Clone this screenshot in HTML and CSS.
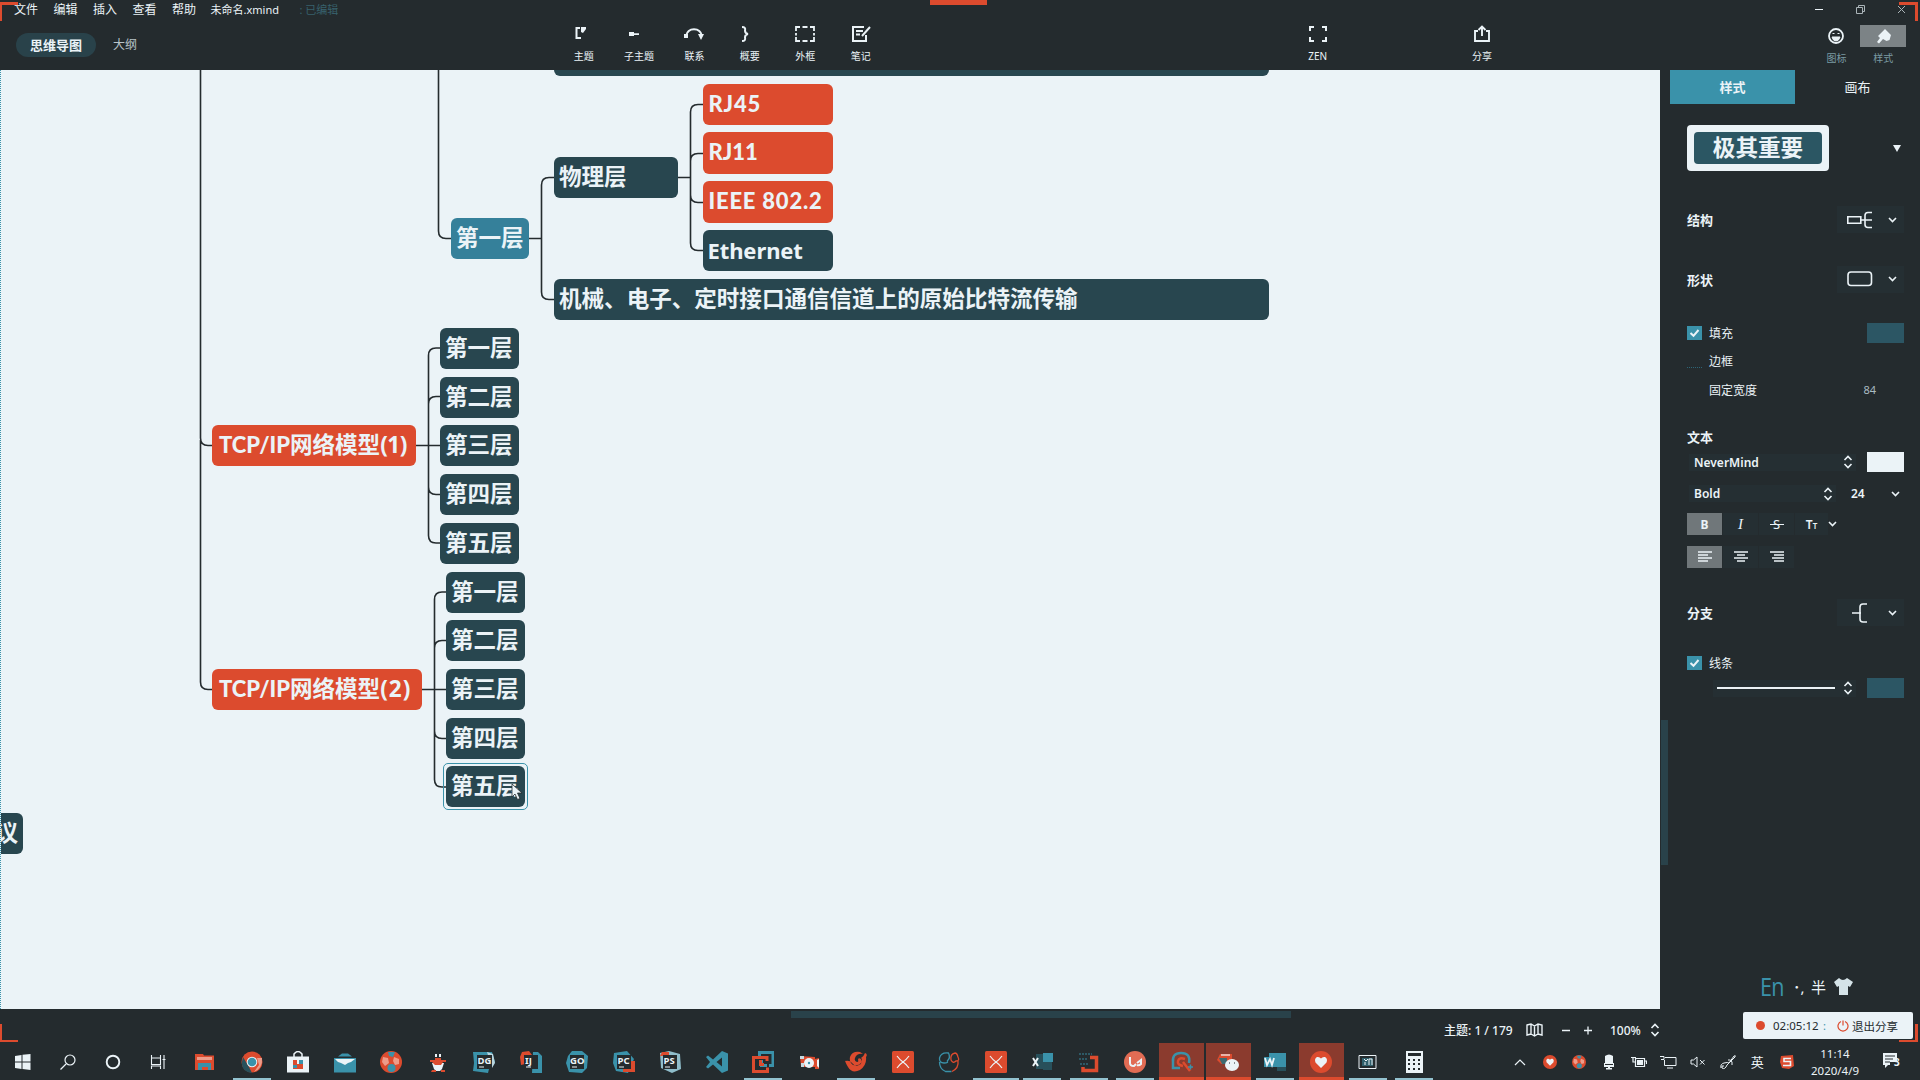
FILE: index.html
```html
<!DOCTYPE html>
<html lang="zh-CN">
<head>
<meta charset="utf-8">
<title>未命名.xmind</title>
<link rel="stylesheet" href="styles.css">
</head>
<body>
<svg class="defs" width="0" height="0" aria-hidden="true">
  <defs>
    <symbol id="chev" viewBox="0 0 9 6"><path d="M1 1l3.500 3.500L8 1" fill="none" stroke="currentColor" stroke-width="1.600"/></symbol>
    <symbol id="updown" viewBox="0 0 10 14"><path d="M1.500 5L5 1.500 8.500 5M1.500 9L5 12.500 8.500 9" fill="none" stroke="currentColor" stroke-width="1.600"/></symbol>
    <symbol id="tick" viewBox="0 0 15 14"><path d="M3.500 7l3 2.800L11.500 4" fill="none" stroke="currentColor" stroke-width="2"/></symbol>
    <symbol id="ball" viewBox="0 0 22 22"><circle cx="11" cy="11" r="11" fill="#dc4b2e"/><path d="M8 1h7l-2 5-4-1z" fill="#3a92aa"/><circle cx="11.500" cy="17" r="4" fill="#3a92aa"/><path d="M3 6l5 1 1 5-4 3-3-4zM14 6l5 2v5l-4 1-2-4z" fill="#ed9c8a"/></symbol>
    <symbol id="xapp" viewBox="0 0 22 22"><rect width="22" height="22" rx="1.500" fill="#dc4b2e"/><path d="M5 5q3 4 6 6 3-2 6-6M5 17q3-4 6-6 3 2 6 6" fill="none" stroke="#ebf3f7" stroke-width="1.200"/></symbol>
    <symbol id="heart" viewBox="0 0 22 22"><circle cx="11" cy="11" r="11" fill="#dc4b2e"/><path d="M11 17L5.500 11.500q-1.500-4 1.500-5.500 2.500-.5 4 1.500 1.500-2 4-1.500 3 1.500 1.500 5.500z" fill="#ebf3f7"/></symbol>
  </defs>
</svg>
<div class="app">
  <header class="head">
    <nav class="menu">
      <span>文件</span><span>编辑</span><span>插入</span><span>查看</span><span>帮助</span>
      <span class="doc">未命名.xmind</span><span class="edited">: 已编辑</span>
      <span class="window-buttons">
        <svg width="9" height="9"><path d="M0 4.500h8" stroke="#ebf3f7"/></svg>
        <svg width="9" height="9"><path d="M.5 2.500h6v6h-6zM2.500 2.500v-2h6v6h-2" fill="none" stroke="#aab4b8"/></svg>
        <svg width="9" height="9"><path d="M1 1l7 7M8 1L1 8" stroke="#aab4b8"/></svg>
      </span>
    </nav>
    <div class="bar">
      <div class="modes"><span class="pill">思维导图</span><span class="outline">大纲</span></div>
      <div class="tools main-tools">
        <div class="tool"><svg viewBox="0 0 22 18"><path d="M7 3H3.500v10H8" fill="none" stroke="currentColor" stroke-width="2"/><path d="M8 2h5v2l-3 4-2-1z" fill="currentColor"/></svg>主题</div>
        <div class="tool"><svg viewBox="0 0 22 18"><path d="M1 7h5v4H1zM6 8.300h5v1.800H6z" fill="currentColor"/></svg>子主题</div>
        <div class="tool"><svg viewBox="0 0 22 18"><path d="M3 11C5 2 17 2 19 11" fill="none" stroke="currentColor" stroke-width="2"/><path d="M1 9h4v4H1zM15 9h6l-3 6z" fill="currentColor"/></svg>联系</div>
        <div class="tool"><svg viewBox="0 0 22 18"><path d="M3 2q4 0 3 3.500 0 3 3 3.500-3 .5-3 3.500 1 3.500-3 3.500" fill="none" stroke="currentColor" stroke-width="2"/></svg>概要</div>
        <div class="tool"><svg viewBox="0 0 22 18"><path d="M2 6V2h4M16 2h4v4M20 12v4h-4M6 16H2v-4M8.500 2h5M8.500 16h5M2 8v2.500M20 8v2.500" fill="none" stroke="currentColor" stroke-width="1.800"/></svg>外框</div>
        <div class="tool"><svg viewBox="0 0 22 18"><path d="M14 2H3v14h13v-6M6 6h7M6 9.500h4M20 2l-8 9" fill="none" stroke="currentColor" stroke-width="2"/></svg>笔记</div>
      </div>
      <div class="tool zen"><svg viewBox="0 0 22 18"><path d="M3 6V2h4M15 2h4v4M19 12v4h-4M7 16H3v-4" fill="none" stroke="currentColor" stroke-width="2"/></svg>ZEN</div>
      <div class="tool share"><svg viewBox="0 0 22 18"><path d="M7 6H4v10h14V6h-3M11 11V2M7.500 5L11 1.500 14.500 5" fill="none" stroke="currentColor" stroke-width="1.900"/></svg>分享</div>
      <div class="tool side icon-tool"><svg viewBox="0 0 18 18"><circle cx="9" cy="9" r="7" fill="none" stroke="currentColor" stroke-width="1.800"/><path d="M5 10h8q-1 4-4 4t-4-4M5.500 6.500h2M10.500 6.500h2" stroke="currentColor" stroke-width="1" fill="currentColor"/></svg><em>图标</em></div>
      <div class="tool side style-tool"><svg viewBox="0 0 46 22"><path d="M25 4l6 6-1.500 5-3 1-3.500-2-4 4.500-2-1.500 3-4-2-2z" fill="#ebf3f7"/></svg><em>样式</em></div>
    </div>
  </header>

  <main class="work">
    <section class="canvas">
      <svg class="links" width="1660" height="939" fill="none" stroke="#242b2e" stroke-width="1.600">
        <path d="M200.500 0V368q0 7.500 7.500 7.500h5M200.500 370V612q0 7.500 7.500 7.500h5"/>
        <path d="M438.500 0V161q0 7.500 7.500 7.500h6M529 168.500h12.500M554 107.500h-5q-7.500 0-7.500 7.500V167q0 0 0 0V222q0 7.500 7.500 7.500h5"/>
        <path d="M678 107.500h12.500M703 34.500h-5q-7.500 0-7.500 7.500V173q0 7.500 7.500 7.500h5M690.500 91q0-7.500 7.500-7.500h5M690.500 125q0 7.500 7.500 7.500h5"/>
        <path d="M416 375.500h24M440 278h-4q-7.500 0-7.500 7.500V465.500q0 7.500 7.500 7.500h4M428.500 334q0-7.500 7.500-7.500h4M428.500 417q0 7.500 7.500 7.500h4"/>
        <path d="M422 619.500h24M446 522h-4q-7.500 0-7.500 7.500V709.500q0 7.500 7.500 7.500h4M434.500 578q0-7.500 7.500-7.500h4M434.500 661q0 7.500 7.500 7.500h4"/>
      </svg>
      <div class="node cut"></div>
      <div class="node n-rj45 red">RJ45</div>
      <div class="node n-rj11 red">RJ11</div>
      <div class="node n-ieee red">IEEE 802.2</div>
      <div class="node n-eth">Ethernet</div>
      <div class="node n-phy">物理层</div>
      <div class="node n-mech">机械、电子、定时接口通信信道上的原始比特流传输</div>
      <div class="node n-first teal">第一层</div>
      <div class="node n-tcp1 red tcp"><b>TCP/IP</b>网络模型<em>(1)</em></div>
      <div class="node n-tcp2 red tcp"><b>TCP/IP</b>网络模型<em>(2)</em></div>
      <div class="layers l-one"><div class="node">第一层</div><div class="node">第二层</div><div class="node">第三层</div><div class="node">第四层</div><div class="node">第五层</div></div>
      <div class="layers l-two"><div class="node">第一层</div><div class="node">第二层</div><div class="node">第三层</div><div class="node">第四层</div><div class="node selected">第五层</div></div>
      <div class="node n-left">议</div>
      <svg class="cursor" width="12" height="18"><path d="M1 1v13l3-3 2.500 5.500 2.500-1-2.500-5.500H11z" fill="#ebf3f7" stroke="#242b2e" stroke-width=".8"/></svg>
    </section>
    <div class="vscroll"><i></i></div>

    <aside class="panel">
      <div class="tabs"><span class="on">样式</span><span>画布</span></div>
      <div class="preview"><div class="frame"><span>极其重要</span></div><svg width="8" height="7"><path d="M0 0h8L4 7z" fill="#ebf3f7"/></svg></div>
      <div class="row r-structure"><h3>结构</h3><div class="drop"><svg width="26" height="18"><path d="M.8 5.800h13v6.500H.8zM14 9h11M25 1.500h-4q-3 0-3 3v9q0 3 3 3h4" fill="none" stroke="currentColor" stroke-width="1.600"/></svg><svg class="chev"><use href="#chev"/></svg></div></div>
      <div class="row r-shape"><h3>形状</h3><div class="drop"><svg width="26" height="18"><rect x="1" y="2" width="23.500" height="13.500" rx="3" fill="none" stroke="currentColor" stroke-width="1.600"/></svg><svg class="chev"><use href="#chev"/></svg></div></div>
      <div class="row r-fill"><svg class="check"><use href="#tick"/></svg><label>填充</label><i class="swatch dim"></i></div>
      <div class="row r-border"><i class="unchecked"></i><label>边框</label></div>
      <div class="row r-width"><i class="nocheck"></i><label>固定宽度</label><span class="num">84</span></div>
      <div class="row r-text"><h3>文本</h3></div>
      <div class="row r-font"><div class="select wide">NeverMind<svg class="ud"><use href="#updown"/></svg></div><i class="swatch white"></i></div>
      <div class="row r-weight"><div class="select">Bold<svg class="ud"><use href="#updown"/></svg></div><span class="size">24</span><svg class="chev"><use href="#chev"/></svg></div>
      <div class="row r-format"><span class="btn on"><b>B</b></span><span class="btn i">I</span><span class="btn s">S</span><span class="btn t">T<small>T</small></span><svg class="chev"><use href="#chev"/></svg></div>
      <div class="row r-align">
        <span class="btn on"><svg width="14" height="11"><path d="M0 1h14M0 4h10M0 7h14M0 10h10" stroke="currentColor" stroke-width="1.500"/></svg></span>
        <span class="btn"><svg width="14" height="11"><path d="M0 1h14M3 4h8M0 7h14M3 10h8" stroke="currentColor" stroke-width="1.500"/></svg></span>
        <span class="btn"><svg width="14" height="11"><path d="M0 1h14M4 4h10M2 7h12M4 10h10" stroke="currentColor" stroke-width="1.500"/></svg></span>
      </div>
      <div class="row r-branch"><h3>分支</h3><div class="drop"><svg width="26" height="20"><path d="M5 10h9M20 1h-4q-3 0-3 3v12q0 3 3 3h4" fill="none" stroke="currentColor" stroke-width="1.600"/></svg><svg class="chev"><use href="#chev"/></svg></div></div>
      <div class="row r-line"><svg class="check"><use href="#tick"/></svg><label>线条</label></div>
      <div class="row r-stroke"><div class="line-select"><i></i><svg class="ud"><use href="#updown"/></svg></div><i class="swatch dim"></i></div>
    </aside>
  </main>

  <footer class="status">
    <i class="hscroll"></i>
    <span class="count">主题: 1 / 179</span>
    <svg class="map" width="17" height="14"><path d="M1 2l4-1 3.500 2L12 1l4 1v10l-4-1-3.500 2L5 11l-4 1zM5 1v10M8.500 3v10M12 1v10" fill="none" stroke="currentColor" stroke-width="1.400"/></svg>
    <svg class="minus" width="9" height="9"><path d="M0 4.500h8" stroke="currentColor" stroke-width="1.500"/></svg>
    <svg class="plus" width="9" height="9"><path d="M0 4.500h8M4 .5v8" stroke="currentColor" stroke-width="1.300"/></svg>
    <span class="percent">100%</span>
    <svg class="ud"><use href="#updown"/></svg>
  </footer>

  <footer class="taskbar">
    <div class="system">
      <span><svg width="16" height="16"><path d="M0 2l6.500-1v6.500H0zM7.500.8L15.500 0v7.500h-8zM0 8.500h6.500V15L0 14zM7.500 8.500h8V16l-8-1z" fill="#ebf3f7"/></svg></span>
      <span><svg width="16" height="16"><circle cx="10" cy="6" r="5" fill="none" stroke="#ebf3f7" stroke-width="1.200"/><path d="M6 10l-5.500 5.500" stroke="#ebf3f7" stroke-width="1.300"/></svg></span>
      <span><svg width="16" height="16"><circle cx="8" cy="8" r="6.300" fill="none" stroke="#ebf3f7" stroke-width="1.900"/></svg></span>
      <span><svg width="16" height="16"><path d="M1.500 1v3h9V1M1.500 15v-3h9v3M1.500 4v6.500h9V4M14 1v14M12.500 5.500h3" fill="none" stroke="#ebf3f7" stroke-width="1.100"/></svg></span>
    </div>
    <div class="apps">
      <span><svg viewBox="0 0 22 22"><path d="M1 3h8l1 1.500h10V19H1z" fill="#dc4b2e"/><path d="M3 6h15v3H3z" fill="#ed9c8a"/><path d="M4 12h13v7h-3v-3H8v3H4z" fill="#3a92aa"/></svg></span>
      <span class="run"><svg viewBox="0 0 22 22"><circle cx="11" cy="11" r="10.500" fill="#dc4b2e"/><path d="M2 6l6 10 3 6Q1 21 .7 12z" fill="#28505b"/><path d="M13 21l5-7-2-7h5q1 10-8 14z" fill="#ed9c8a"/><circle cx="11" cy="11" r="5.300" fill="#ebf3f7"/><circle cx="11" cy="11" r="4.300" fill="#3a92aa"/></svg></span>
      <span><svg viewBox="0 0 22 22"><path d="M7 7V3q4-5 8 0v4" fill="none" stroke="#ebf3f7" stroke-width="1.500"/><path d="M0 5.500h22v16H0z" fill="#ebf3f7"/><path d="M6 9h4v4h6v5H6z" fill="#dc4b2e"/><path d="M12 9h4v4h-4zM6 14h4v3H6z" fill="#3a92aa"/></svg></span>
      <span><svg viewBox="0 0 22 22"><path d="M0 7h22v14.500H0z" fill="#3a92aa"/><path d="M4 5.500l4-3h6l4 3z" fill="#3a92aa"/><path d="M1 8h20l-4 3-3 1-3 2-4-2-3-1z" fill="#ebf3f7"/></svg></span>
      <span><svg viewBox="0 0 22 22"><use href="#ball"/></svg></span>
      <span><svg viewBox="0 0 22 22"><path d="M8 3h2v3H8zM12 3h2v3h-2zM5 12h12l-2 6-2 2H9l-2-2z" fill="#ebf3f7"/><path d="M8 7h6v2h5v2h-3l-2 3H8l-3-3H3V9h5zM5 19h4v2H4zM14 19h4v2h-4z" fill="#dc4b2e"/></svg></span>
      <span><svg viewBox="0 0 22 22"><path d="M0 1h19l3 10-6 7-1 4-15-2 1-8z" fill="#3a92aa"/><path d="M14 1l6 2 2 9-3 5z" fill="#b8d5df"/><path d="M4 4h15v14H4z" fill="#242b2e"/><text x="4.500" y="13">DG</text><path d="M6 16h5" stroke="#ebf3f7"/></svg></span>
      <span><svg viewBox="0 0 22 22"><path d="M2 1l7-1 3 4-7 4v5l-4 1L0 6z" fill="#dc4b2e"/><path d="M13 1h5l4 4v17H12z" fill="#3a92aa"/><path d="M4 4h14v14H4z" fill="#242b2e"/><text x="5" y="13">IJ</text><path d="M6 16h5" stroke="#ebf3f7"/></svg></span>
      <span><svg viewBox="0 0 22 22"><path d="M6 0h10l6 5-1 12-5 5-13-1-3-9 2-7z" fill="#3a92aa"/><path d="M4 4h14v14H4z" fill="#242b2e"/><text x="4" y="13">GO</text><path d="M6 16h5" stroke="#ebf3f7"/></svg></span>
      <span><svg viewBox="0 0 22 22"><path d="M1 2l13-2 7 8-6 14-12-2-3-8z" fill="#3a92aa"/><path d="M17 10h5v11H10v-3h7z" fill="#dc4b2e"/><path d="M4 4h14v14H4z" fill="#242b2e"/><text x="4.500" y="13">PC</text><path d="M6 16h5" stroke="#ebf3f7"/></svg></span>
      <span><svg viewBox="0 0 22 22"><path d="M1 2l9-2 11 3 1 15-9 4-11-5z" fill="#8fbdca"/><path d="M3 1h7v4H1z" fill="#dc4b2e"/><path d="M4 4h14v14H4z" fill="#242b2e"/><text x="4.500" y="13">PS</text><path d="M6 16h5" stroke="#ebf3f7"/></svg></span>
      <span><svg viewBox="0 0 22 22"><path d="M16 0l6 2.500v17L16 22l-9-8.500-5 4-2-1.500 4-5-4-5 2-1.500 5 4zM16 6.500L10.500 11l5.500 4.500z" fill="#3a92aa"/></svg></span>
      <span class="run"><svg viewBox="0 0 22 22"><path d="M7.500 6V1.500H21v13h-4M15 14.500H9.500V9" fill="none" stroke="#3a92aa" stroke-width="3"/><path d="M15 10V6.500H1.500V20.500h14v-4M12 13.500H8.500V9" fill="none" stroke="#dc4b2e" stroke-width="3"/></svg></span>
      <span><svg viewBox="0 0 22 22"><path d="M1 5l15 1v2l4-1v11h-4v-2H2z" fill="#dc4b2e"/><circle cx="10" cy="12" r="5" fill="#ebf3f7"/><path d="M18 9l2-1v9l-2-2z" fill="#ebf3f7"/><path d="M1 5h4v3H1zM2 12h3v4H2z" fill="#c5dbe2"/><circle cx="10" cy="12" r="1.200" fill="#3a92aa"/></svg></span>
      <span class="run"><svg viewBox="0 0 22 22"><path d="M0 10q5-1 7 2 3 4 7 2 4-2 2-6-3-2-3 1 1 2-1 2-3-1-2-4 2-5 8-4l-3-2q-8-1-10 5-1 5 3 8 6 1 8-2 2-4 0-5 3-2 4-5 3 1 1 4 1 8-6 13-8 4-12-3-3-5-3-7z" fill="#dc4b2e"/></svg></span>
      <span><svg viewBox="0 0 22 22"><use href="#xapp"/></svg></span>
      <span><svg viewBox="0 0 22 22"><path d="M9 10q4-3 1.500-8Q3 1 1.500 7 1 12 6 12t3-2M1.500 11q0 7 6 9.500h6" fill="none" stroke="#3a92aa" stroke-width="1.300"/><path d="M17 2q-5 1-4 7 2 4 5 1 4 0 2-4-1-4-3-4M20 10q1 7-6 10.500" fill="none" stroke="#dc4b2e" stroke-width="1.300"/></svg></span>
      <span class="run full"><svg viewBox="0 0 22 22"><use href="#xapp"/></svg></span>
      <span class="run"><svg viewBox="0 0 22 22"><path d="M12 2h10v9h-10z" fill="#3a92aa"/><path d="M5 3h7v15H5zM12 11h9v8h-9z" fill="#28505b"/><path d="M2 7l5 8M7 7l-5 8" stroke="#ebf3f7" stroke-width="2"/></svg></span>
      <span class="run"><svg viewBox="0 0 22 22"><path d="M1 3h13M1 8h9M2 13h8" stroke="#31697a" stroke-width="1.300" stroke-dasharray="2 1"/><path d="M12 6.500h6.500v13H5V16" fill="none" stroke="#dc4b2e" stroke-width="3.500"/></svg></span>
      <span class="run"><svg viewBox="0 0 22 22"><circle cx="11" cy="11" r="11" fill="#e16c54"/><path d="M6 6v6q0 3 4 3l2-2M13 12l4-3v4q-2 2-4 1" fill="none" stroke="#ebf3f7" stroke-width="2"/></svg></span>
      <span class="hot"><svg viewBox="0 0 22 22"><path d="M18 12Q20 2 10 2 1 2 2 11v6h7" fill="none" stroke="#3a92aa" stroke-width="2.500"/><path d="M12 11l7 9M14 8q-6-2-7 2t5 5" fill="none" stroke="#dc4b2e" stroke-width="2.500"/><path d="M17 16h5M19.500 13.500v5" stroke="#3a92aa" stroke-width="1.500"/></svg></span>
      <span class="hot"><svg viewBox="0 0 22 22"><path d="M3 3h12v5h2v5H4l-4-4z" fill="#dc4b2e"/><path d="M4 3h9v2H4z" fill="#e8b3a8"/><path d="M2 7h8v6H5z" fill="#3e6970"/><ellipse cx="15" cy="14" rx="7" ry="6" fill="#ebf3f7"/><path d="M12 12h1M17 12h1" stroke="#242b2e"/></svg></span>
      <span class="run"><svg viewBox="0 0 22 22"><path d="M5 2h17v14H5z" fill="#3a92aa"/><path d="M13 16h9v4h-9z" fill="#28505b"/><path d="M0 6h11v10H0z" fill="#3a92aa"/><path d="M1 7l2 7 3-6 2 6 2-7" fill="none" stroke="#ebf3f7" stroke-width="1.800"/></svg></span>
      <span class="hot"><svg viewBox="0 0 22 22"><use href="#heart"/></svg></span>
      <span class="run"><svg viewBox="0 0 22 22"><path d="M2 4.500h17v13H2z" fill="none" stroke="#ebf3f7"/><path d="M5 7h11v8H5z" fill="#31616d"/><path d="M7 8l2 2 2-2M8 11v3M12 8v6M12 8h3v6" fill="none" stroke="#ebf3f7"/></svg></span>
      <span class="run"><svg viewBox="0 0 22 22"><path d="M3 0h17v22H3z" fill="#ebf3f7"/><path d="M5 2h13v3H5zM5 8h2v2H5zM10 8h2v2h-2zM15 8h2v2h-2zM5 12h2v2H5zM10 12h2v2h-2zM15 12h2v2h-2zM5 17h2v2H5zM10 17h2v2h-2zM15 17h2v2h-2z" fill="#242b2e"/></svg></span>
    </div>
    <div class="tray">
      <span><svg width="12" height="8"><path d="M1 7l5-5 5 5" fill="none" stroke="#ebf3f7" stroke-width="1.200"/></svg></span>
      <span><svg width="14" height="14" viewBox="0 0 22 22"><use href="#heart"/></svg></span>
      <span><svg width="14" height="14" viewBox="0 0 22 22"><use href="#ball"/></svg></span>
      <span><svg width="12" height="16"><path d="M2 2q4-3 8 0v8H2zM1 9h1v2h8V9h1v4H7v1h2v1.500H3V14h2v-1H1z" fill="#ebf3f7"/></svg></span>
      <span><svg width="16" height="12"><path d="M4.500 2.500h9v8h-9zM14 5h1.500v3M0 1.500h5M2 1v5h3" fill="none" stroke="#ebf3f7" stroke-width="1.200"/><path d="M6 4h6v5H6z" fill="#ebf3f7"/></svg></span>
      <span><svg width="17" height="14"><path d="M5 2.500h11v8H4.500V5M0 1.500h4v3H1M7 13h6" fill="none" stroke="#ebf3f7"/></svg></span>
      <span><svg width="16" height="12"><path d="M1 4h2.500L7 1v10L3.500 8H1zM10 4l4.500 4.500M14.500 4L10 8.500" fill="none" stroke="#ebf3f7"/></svg></span>
      <span><svg width="16" height="16"><path d="M1 14q-1-4 3-5t5 0l5-7q2-1 1 1L7 11q-2 5-5 3-1-3 2-2M8 6q3-1 4 2v3" fill="none" stroke="#ebf3f7"/></svg></span>
      <span class="cn">英</span>
      <span><svg width="14" height="14"><path d="M1 1l12-1 1 11-5 3-7-1-2-6z" fill="#dc4b2e"/><path d="M11 3.500H4v3h6.500v4H3" fill="none" stroke="#ebf3f7" stroke-width="1.600"/></svg></span>
    </div>
    <div class="clock"><span>11:14</span><span>2020/4/9</span></div>
    <div class="notice"><svg width="16" height="17"><path d="M1 1h14v9H8v3H6l-3 3v-3H1z" fill="#ebf3f7"/><path d="M3 4h10M3 7h8M3 10h5" stroke="#242b2e"/></svg><b>3</b></div>
  </footer>
</div>

<i class="mark top"></i><i class="mark tl"></i><i class="mark tr"></i><i class="mark bl"></i><i class="mark br"></i>
<div class="ime"><span class="en">En</span><span class="dot">･,</span><span class="half">半</span><svg width="19" height="17"><path d="M0 4l5-4q4 4 8 0l6 4-3 5-2-1v9H5V8L3 9z" fill="#d5e3e8"/></svg></div>
<div class="recording"><i></i><span class="time">02:05:12</span><span class="sep">:</span><svg width="12" height="12"><path d="M4 1.500a5 5 0 1 0 4 0M6 .5v5" fill="none" stroke="#dc4b2e" stroke-width="1.200"/></svg><span class="exit">退出分享</span></div>
</body>
</html>
```
FILE: styles.css
```css
:root { --dark: #242b2e; --light: #ebf3f7; --teal: #3a92aa; --red: #dc4b2e; --deep: #28464f; --dim: #29424a; }
* { box-sizing: border-box; }
body { margin: 0; width: 1920px; height: 1080px; overflow: hidden; background: var(--dark); color: var(--light); font-family: "Noto Sans", "Noto Sans CJK SC", sans-serif; font-size: 12px; position: relative; }
.defs { position: absolute; }
svg { display: block; flex: none; }
i, em { font-style: normal; }
.app { display: flex; flex-direction: column; height: 1080px; }

.head { height: 70px; flex: none; }
.menu { display: flex; height: 20px; padding-left: 14px; line-height: 20px; font-size: 12px; white-space: nowrap; }
.menu > span { width: 39.500px; flex: none; }
.menu .doc { width: 89px; margin-left: -1px; font-size: 11px; }
.menu .edited { width: 60px; color: #37616c; font-size: 11px; }
.menu .window-buttons { display: flex; width: auto; gap: 32px; margin-left: auto; padding: 5px 14px 0 0; }
.bar { display: flex; height: 50px; align-items: flex-start; }
.modes { display: flex; width: 566px; padding: 13px 0 0 16px; font-size: 13px; line-height: 24px; }
.pill { width: 80px; height: 24px; border-radius: 12px; background: var(--dim); font-weight: 600; text-align: center; }
.outline { margin-left: 17px; color: #b8c4c9; font-size: 12px; }
.tools { display: flex; }
.tool { display: flex; flex-direction: column; align-items: center; width: 55.400px; flex: none; font-size: 10px; line-height: 14px; padding-top: 5px; }
.tool svg { width: 22px; height: 18px; margin-bottom: 6px; }
.main-tools { width: 333px; margin-left: -10px; }
.zen { margin-left: 401px; }
.share { margin-left: 109px; }
.side em { color: #7b9aa3; }
.icon-tool { margin-left: 299px; padding-top: 7px; }
.icon-tool svg { width: 18px; height: 18px; margin-bottom: 6px; }
.style-tool { width: 46px; margin-left: -4px; }
.style-tool svg { width: 46px; height: 22px; margin-bottom: 4px; background: #7c8386; }

.work { display: flex; height: 939px; flex: none; }
.canvas { position: relative; width: 1660px; flex: none; overflow: hidden; background: var(--light); border-left: 1px dotted var(--teal); }
.links { position: absolute; left: -1px; top: 0; }
.node { position: absolute; height: 41px; border-radius: 6px; background: var(--deep); padding-left: 5px; font-size: 22.550px; line-height: 40px; font-weight: 700; white-space: nowrap; }
.red { background: var(--red); }
.teal { background: #35809a; }
.cut { left: 553px; top: -35px; width: 715px; }
.n-rj45, .n-rj11, .n-ieee, .n-eth { left: 701.500px; width: 130px; }
.n-rj45, .n-rj11, .n-ieee { padding-left: 6px; letter-spacing: .8px; }
.n-rj45, .n-rj11, .n-ieee, .tcp b { font-family: Lato, sans-serif; font-weight: 900; }
.n-rj45, .n-rj11, .n-ieee { font-size: 22px; }
.n-rj11 { letter-spacing: 0; }
.n-rj45 { top: 14px; }
.n-rj11 { top: 62px; height: 42px; }
.n-ieee { top: 111px; height: 42px; }
.n-eth { top: 160px; font-size: 22px; letter-spacing: -.1px; }
.n-phy { left: 553px; top: 87px; width: 124px; }
.n-mech { left: 553px; top: 209px; width: 715px; }
.n-first { left: 450px; top: 148px; width: 78px; }
.n-tcp1 { left: 211px; top: 355px; width: 204px; }
.n-tcp2 { left: 211px; top: 599px; width: 210px; }
.tcp { padding-left: 7px; }
.tcp b { font-size: 22px; }
.n-tcp1 em { letter-spacing: -.5px; }
.n-tcp2 em { letter-spacing: 1px; }
.layers { position: absolute; display: flex; flex-direction: column; gap: 7.700px; }
.layers .node { position: relative; width: 79px; }
.l-one { left: 439px; top: 258px; }
.l-two { left: 445px; top: 501.500px; }
.selected::after { content: ""; position: absolute; inset: -3px; border: 1px solid var(--teal); border-radius: 5px; }
.n-left { left: -50px; top: 743px; width: 72px; padding: 0 5px; text-align: right; }
.cursor { position: absolute; left: 510px; top: 713px; }
.vscroll { width: 10px; padding: 650px 0 0 1px; }
.vscroll i { display: block; width: 7px; height: 145px; background: var(--dim); }

.panel { width: 250px; }
.tabs { display: flex; height: 34px; line-height: 35px; font-size: 13px; text-align: center; }
.tabs span { width: 126px; }
.tabs .on { background: var(--teal); font-weight: 700; }
.preview { display: flex; align-items: center; height: 46px; margin: 21px 0 25px 17px; gap: 64px; }
.frame { width: 142px; height: 46px; padding: 7px; border-radius: 4px; background: var(--light); }
.frame span { display: block; height: 32px; border-radius: 4px; background: #2b5663; line-height: 31px; font-size: 22.600px; font-weight: 700; text-align: center; }
.row { display: flex; align-items: center; padding: 0 16px 0 17px; }
.row h3 { margin: 0; font-size: 13px; font-weight: 700; }
.row label { margin-left: 7px; }
.drop { display: flex; align-items: center; justify-content: space-between; width: 67px; height: 27px; margin-left: auto; padding: 0 7px 0 10px; background: #252f33; }
.chev { width: 9px; height: 6px; }
.ud { width: 10px; height: 14px; }
.check { width: 15px; height: 14px; background: var(--teal); }
.swatch { width: 37px; height: 20px; margin-left: auto; background: #2c5664; }
.swatch.white { background: var(--light); }
.unchecked { width: 15px; height: 14px; border-bottom: 1px dotted #2d6576; }
.nocheck { width: 15px; }
.num { margin-left: auto; padding-right: 28px; font-size: 11px; color: #a9bcc2; }
.select { display: flex; align-items: center; justify-content: space-between; width: 147px; height: 17px; margin-left: 2px; padding: 0 3px 0 5px; background: #252f33; font-weight: 600; }
.select.wide { width: 167px; }
.size { margin-left: 15px; font-weight: 600; }
.r-weight > .chev { margin-left: auto; margin-right: 4px; }
.btn { display: flex; width: 35px; height: 22px; align-items: center; justify-content: center; margin-right: 1px; background: #252f33; font-size: 12px; }
.btn.on { background: #70777a; }
.btn.i { font-family: "Liberation Serif", serif; font-style: italic; font-size: 15px; }
.btn.s { font-size: 13px; background: linear-gradient(var(--light), var(--light)) center / 14px 1px no-repeat #252f33; }
.btn.t { width: 33px; margin-right: 0; font-weight: 600; }
.btn small { font-size: 8px; padding-top: 3px; }
.r-structure { height: 47px; }
.r-shape { height: 72px; }
.r-fill { height: 36px; }
.r-border { height: 20px; }
.r-width { height: 37px; }
.r-text { height: 42px; padding-top: 15px; }
.r-font { height: 24px; }
.r-weight { height: 39px; }
.r-format { height: 22px; }
.r-align { height: 43px; }
.r-branch { height: 69px; }
.r-line { height: 32px; }
.r-stroke { height: 18px; }
.line-select { display: flex; align-items: center; justify-content: space-between; width: 143px; height: 17px; margin-left: 26px; padding: 0 3px 0 4px; background: #252f33; }
.line-select i { width: 118px; height: 2px; background: var(--light); }

.status { display: flex; align-items: center; height: 34px; flex: none; padding-top: 8px; font-weight: 500; font-size: 12px; }
.hscroll { width: 500px; height: 7px; margin: -32px 153px 0 791px; background: var(--dim); }
.count { width: 82px; white-space: nowrap; }
.minus { margin-left: 19px; }
.plus { margin-left: 13px; }
.percent { width: 40px; margin-left: 17px; }

.taskbar { display: flex; height: 37px; flex: none; }
.system { display: flex; width: 182px; }
.system span { display: flex; width: 45px; align-items: center; justify-content: center; }
.apps { display: flex; width: 1256px; }
.apps span { display: flex; width: 46.500px; flex: none; align-items: center; justify-content: center; }
.apps svg { width: 22px; height: 22px; }
.apps text { font: 700 9.500px "Noto Sans", sans-serif; fill: var(--light); }
.apps .run { background: linear-gradient(#93c2cf, #93c2cf) center bottom / 38px 2px no-repeat; }
.apps .run.full { background-size: 46px 2px; }
.apps .hot { background: linear-gradient(var(--red), var(--red)) center bottom / 45px 3px no-repeat, linear-gradient(#8b3b2e, #8b3b2e) center / 45px 100% no-repeat; }
.tray { display: flex; width: 300px; margin-left: 67px; }
.tray span { display: flex; width: 29.700px; flex: none; align-items: center; justify-content: center; }
.tray .cn { font-size: 13px; }
.clock { display: flex; flex-direction: column; width: 60px; text-align: center; line-height: 17px; padding-top: 2px; font-size: 11.500px; }
.notice { display: flex; width: 24px; margin: 9px 0 0 17px; }
.notice b { margin: 3px 0 0 -4px; font-size: 10px; line-height: 15px; }

.mark { position: absolute; border: 0 solid var(--red); }
.mark.top { left: 930px; top: 0; width: 57px; height: 5px; background: var(--red); }
.mark.tl { left: 0; top: 2px; width: 18px; height: 19px; border-width: 3px 0 0 2px; }
.mark.tr { left: 1899px; top: 2px; width: 19px; height: 19px; border-width: 3px 3px 0 0; }
.mark.bl { left: 0; top: 1024px; width: 18px; height: 18px; border-width: 0 0 2px 2px; }
.mark.br { left: 1899px; top: 1024px; width: 19px; height: 18px; border-width: 0 3px 2px 0; }
.ime { position: absolute; left: 1760px; top: 972px; display: flex; align-items: center; height: 28px; }
.en { width: 33px; color: var(--teal); font-family: "Open Sans", sans-serif; font-size: 26px; letter-spacing: -1px; line-height: 28px; transform: scaleX(.83); transform-origin: left; }
.dot { width: 18px; font-size: 15px; }
.half { width: 23px; font-size: 15px; }
.recording { position: absolute; left: 1743px; top: 1012px; display: flex; align-items: center; width: 170px; height: 27px; padding-left: 13px; border-radius: 2px; background: var(--light); color: var(--dark); font-size: 11px; white-space: nowrap; }
.recording i { width: 9px; height: 9px; margin-right: 8px; border-radius: 50%; background: var(--red); }
.time { width: 50px; font-size: 11.500px; }
.sep { width: 14px; color: var(--teal); }
.exit { margin-left: 3px; font-size: 11.500px; }
```
